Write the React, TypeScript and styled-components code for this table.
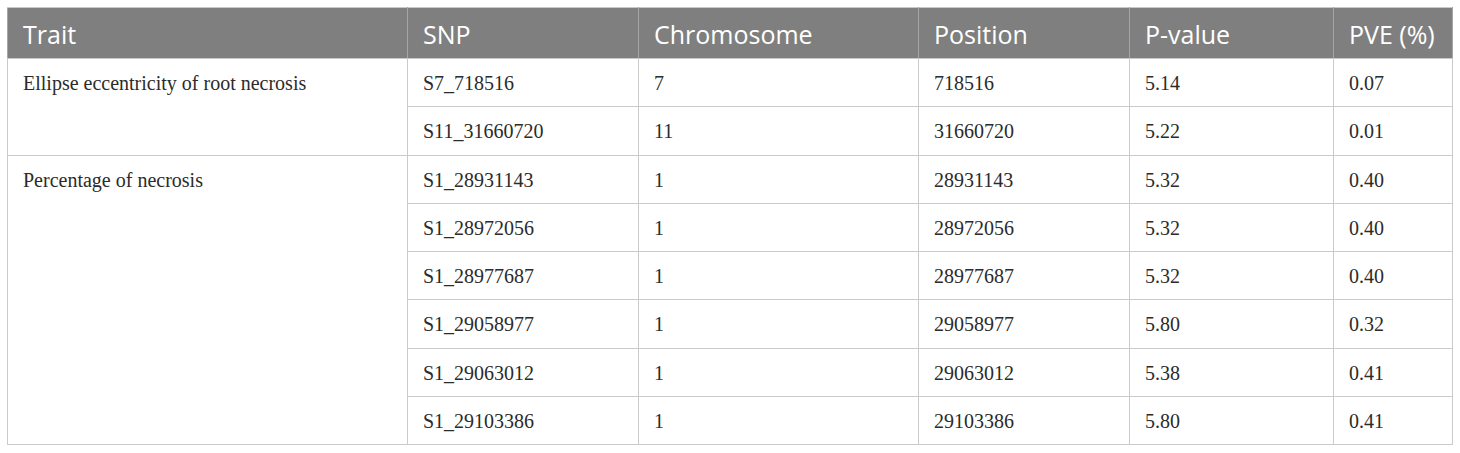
import React from "react";
import styled, { createGlobalStyle } from "styled-components";

const Global = createGlobalStyle`
  html, body { margin: 0; padding: 0; background: #ffffff; }
`;

const Page = styled.div`
  padding: 7px 8px 7px 7px;
`;

const Table = styled.table`
  width: 1445px;
  table-layout: fixed;
  border-collapse: collapse;
  border: 1px solid #c9c9c9;
`;

const HeadCell = styled.th`
  background: #7f7f7f;
  color: #ffffff;
  font-family: "Open Sans", "Noto Sans", sans-serif;
  font-weight: 400;
  font-size: 25px;
  line-height: 32px;
  text-align: left;
  padding: 9.5px 15px 8.5px;
  border: 1px solid #a5a5a5;
  border-top-color: #c9c9c9;
  border-bottom-color: #c9c9c9;
  white-space: nowrap;
`;

const Cell = styled.td`
  font-family: "Liberation Serif", "Times New Roman", serif;
  font-size: 20px;
  line-height: 24px;
  color: #2b2b2b;
  text-align: left;
  vertical-align: top;
  padding: 12px 15px 11.3px;
  border: 1px solid #cbcbcb;
  white-space: nowrap;
`;

const widths = [400, 231, 280, 211, 204, 119];
const headers = ["Trait", "SNP", "Chromosome", "Position", "P-value", "PVE (%)"];

type Row = [string, string, string, string, string];
const groups: { trait: string; rows: Row[] }[] = [
  {
    trait: "Ellipse eccentricity of root necrosis",
    rows: [
      ["S7_718516", "7", "718516", "5.14", "0.07"],
      ["S11_31660720", "11", "31660720", "5.22", "0.01"],
    ],
  },
  {
    trait: "Percentage of necrosis",
    rows: [
      ["S1_28931143", "1", "28931143", "5.32", "0.40"],
      ["S1_28972056", "1", "28972056", "5.32", "0.40"],
      ["S1_28977687", "1", "28977687", "5.32", "0.40"],
      ["S1_29058977", "1", "29058977", "5.80", "0.32"],
      ["S1_29063012", "1", "29063012", "5.38", "0.41"],
      ["S1_29103386", "1", "29103386", "5.80", "0.41"],
    ],
  },
];

export default function App() {
  return (
    <Page>
      <Global />
      <Table>
        <colgroup>
          {widths.map((w, i) => (
            <col key={i} style={{ width: w }} />
          ))}
        </colgroup>
        <thead>
          <tr>
            {headers.map((h) => (
              <HeadCell key={h}>{h}</HeadCell>
            ))}
          </tr>
        </thead>
        <tbody>
          {groups.map((g) =>
            g.rows.map((r, i) => (
              <tr key={g.trait + i}>
                {i === 0 && <Cell rowSpan={g.rows.length}>{g.trait}</Cell>}
                {r.map((v, j) => (
                  <Cell key={j}>{v}</Cell>
                ))}
              </tr>
            ))
          )}
        </tbody>
      </Table>
    </Page>
  );
}
